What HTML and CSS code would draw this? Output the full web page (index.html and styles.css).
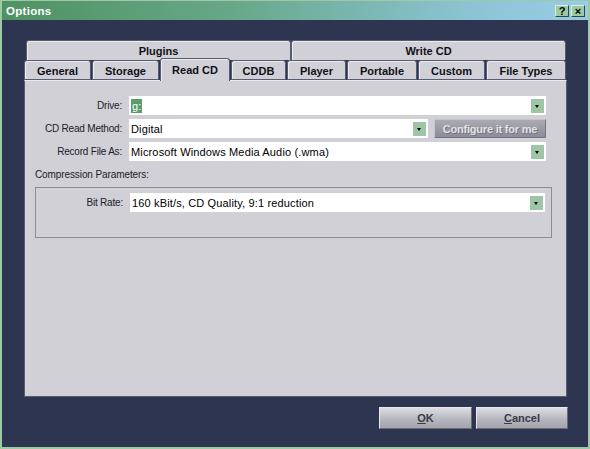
FILE: index.html
```html
<!DOCTYPE html>
<html>
<head>
<meta charset="utf-8">
<link rel="stylesheet" href="styles.css">
</head>
<body>
<div class="window">
  <div class="titlebar">
    <span class="title">Options</span>
    <div class="tbtns">
      <span class="tbtn">?</span>
      <span class="tbtn">×</span>
    </div>
  </div>
  <div class="content">
    <div class="tabs">
      <div class="tabrow top">
        <div class="tab w-plugins">Plugins</div>
        <div class="tab w-write">Write CD</div>
      </div>
      <div class="tabrow bottom">
        <div class="tab w-general">General</div>
        <div class="tab w-storage">Storage</div>
        <div class="tab w-read selected">Read CD</div>
        <div class="tab w-cddb">CDDB</div>
        <div class="tab w-player">Player</div>
        <div class="tab w-portable">Portable</div>
        <div class="tab w-custom">Custom</div>
        <div class="tab w-types">File Types</div>
      </div>
    </div>
    <div class="panel">
      <div class="form">
        <label class="lbl">Drive:</label>
        <div class="combo"><span class="sel">g:</span><span class="arrow"></span></div>
        <label class="lbl">CD Read Method:</label>
        <div class="pair">
          <div class="combo grow"><span>Digital</span><span class="arrow"></span></div>
          <div class="cfg">Configure it for me</div>
        </div>
        <label class="lbl">Record File As:</label>
        <div class="combo"><span>Microsoft Windows Media Audio (.wma)</span><span class="arrow"></span></div>
      </div>
      <div class="section">Compression Parameters:</div>
      <div class="group">
        <div class="form">
          <label class="lbl">Bit Rate:</label>
          <div class="combo"><span>160 kBit/s, CD Quality, 9:1 reduction</span><span class="arrow"></span></div>
        </div>
      </div>
    </div>
    <div class="buttons">
      <div class="btn ok"><u>O</u>K</div>
      <div class="btn cancel"><u>C</u>ancel</div>
    </div>
  </div>
</div>
</body>
</html>
```
FILE: styles.css
```css
html, body {
  margin: 0;
  padding: 0;
  background: #2e3550;
}
.window {
  width: 590px;
  height: 449px;
  box-sizing: border-box;
  background: #2e3550;
  border: 2px solid #9ccaa4;
  border-top-width: 1px;
  display: flex;
  flex-direction: column;
  font-family: "Liberation Sans", Arial, sans-serif;
}
.titlebar {
  height: 19px;
  background: linear-gradient(to right, #4f9262 0%, #68a88a 40%, #8cc4d4 80%, #98cce8 100%);
  display: flex;
  align-items: center;
  justify-content: space-between;
  padding: 0 3px 0 4px;
}
.title {
  color: #fff;
  font-weight: bold;
  font-size: 11.5px;
  letter-spacing: 0.3px;
}
.tbtns {
  display: flex;
  gap: 2px;
}
.tbtn {
  width: 14px;
  height: 12px;
  box-sizing: border-box;
  background: #9ccaa4;
  border: 1px solid #2e4a36;
  border-top-color: #d8f0dc;
  border-left-color: #d8f0dc;
  color: #000;
  font-weight: bold;
  font-size: 11px;
  line-height: 10px;
  text-align: center;
}
.content {
  flex: 1;
  padding: 20px 21px 0 22px;
  display: flex;
  flex-direction: column;
}
.tabs {
  display: flex;
  flex-direction: column;
}
.tabrow {
  display: flex;
  gap: 1px;
  height: 20px;
  align-items: flex-end;
}
.tabrow.top {
  padding-left: 2px;
  gap: 0;
}
.tab {
  box-sizing: border-box;
  height: 20px;
  background: #d0d0d6;
  border: 1px solid #565c74;
  border-bottom: none;
  border-radius: 3px 3px 0 0;
  box-shadow: inset 1px 1px 0 #ececf0;
  font-size: 11px;
  font-weight: bold;
  color: #101018;
  display: flex;
  align-items: center;
  justify-content: center;
  padding-top: 1px;
}
.tabrow.bottom .tab {
  border-bottom: 1px solid #565c74;
}
.tabrow.bottom .tab.selected {
  height: 23px;
  margin-bottom: -1px;
  border-bottom: none;
  position: relative;
  z-index: 1;
  padding-top: 0;
}
.w-plugins { width: 265px; }
.w-write { width: 275px; }
.w-general { width: 67px; }
.w-storage { width: 67px; }
.w-read { width: 70px; }
.w-cddb { width: 55px; }
.w-player { width: 59px; }
.w-portable { width: 70px; }
.w-custom { width: 67px; }
.w-types { width: 80px; }
.panel {
  height: 317px;
  box-sizing: border-box;
  background: #d0d0d6;
  border: 1px solid #565c74;
  border-top-color: #ececf0;
  padding: 15px 20px 0 10px;
}
.form {
  display: grid;
  grid-template-columns: 87px 1fr;
  column-gap: 7px;
  row-gap: 4px;
  align-items: center;
}
.lbl {
  text-align: right;
  font-size: 10px;
  color: #202028;
  letter-spacing: -0.2px;
}
.combo {
  height: 19px;
  box-sizing: border-box;
  background: #fff;
  display: flex;
  align-items: center;
  justify-content: space-between;
  padding: 0 2px 0 2px;
  font-size: 11px;
  color: #000;
  letter-spacing: 0.15px;
}
.combo.grow {
  flex: 1;
}
.sel {
  background: #5b9b6c;
  color: #fff;
  padding: 0 1px;
  line-height: 14px;
}
.arrow {
  width: 13px;
  height: 14px;
  background: #9ec6a6;
  position: relative;
  flex: none;
}
.arrow::after {
  content: "";
  position: absolute;
  left: 4px;
  top: 6px;
  border-left: 2.5px solid transparent;
  border-right: 2.5px solid transparent;
  border-top: 3px solid #000;
}
.pair {
  display: flex;
  gap: 6px;
}
.cfg {
  width: 112px;
  height: 19px;
  box-sizing: border-box;
  background: linear-gradient(#aaaab2, #8c8c96);
  border: 1px solid #74747e;
  border-top-color: #c4c4cc;
  border-left-color: #c4c4cc;
  color: #e2e2e8;
  font-size: 11px;
  font-weight: bold;
  text-shadow: 1px 1px 0 #74747e;
  display: flex;
  align-items: center;
  justify-content: center;
  letter-spacing: -0.2px;
}
.section {
  font-size: 10px;
  color: #202028;
  margin-top: 6px;
  height: 16px;
  line-height: 16px;
  letter-spacing: -0.1px;
}
.group {
  margin-top: 4px;
  width: 517px;
  height: 51px;
  box-sizing: border-box;
  border: 1px solid #8c8c94;
  padding: 5px 6px 0 0;
}
.buttons {
  display: flex;
  justify-content: flex-end;
  gap: 4px;
  margin-top: 10px;
  margin-right: -1px;
}
.btn {
  height: 22px;
  box-sizing: border-box;
  background: linear-gradient(#dcdce2, #b4b4bc 60%, #a4a4ac);
  border: 1px solid #6a6a74;
  border-top-color: #e8e8ee;
  border-left-color: #e8e8ee;
  font-size: 11px;
  font-weight: bold;
  color: #3a3a48;
  display: flex;
  align-items: center;
  justify-content: center;
}
.btn.ok { width: 93px; }
.btn.cancel { width: 92px; }
```
